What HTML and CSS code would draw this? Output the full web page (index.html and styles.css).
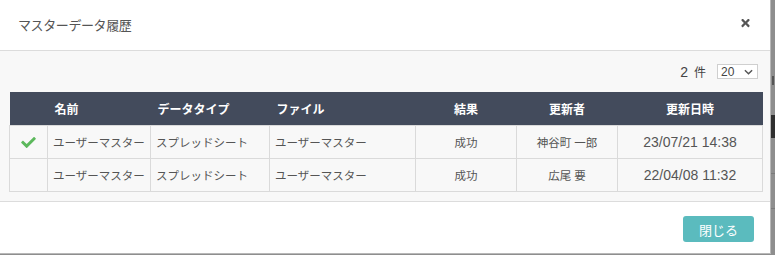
FILE: index.html
```html
<!DOCTYPE html>
<html lang="ja">
<head>
<meta charset="utf-8">
<title>マスターデータ履歴</title>
<link rel="stylesheet" href="styles.css">
</head>
<body>
<div class="page">
  <div class="modal">
    <div class="modal-header">
      <h4 class="modal-title">マスターデータ履歴</h4>
      <button class="close" type="button" aria-label="close">
        <svg viewBox="0 0 352 512" width="9" height="12"><path fill="#555" d="M242.72 256l100.07-100.07c12.28-12.28 12.28-32.19 0-44.48l-22.240-22.24c-12.28-12.28-32.19-12.28-44.48 0L176 189.28 75.930 89.21c-12.28-12.28-32.19-12.28-44.48 0L9.21 111.45c-12.28 12.28-12.28 32.19 0 44.48L109.28 256 9.21 356.07c-12.28 12.28-12.28 32.19 0 44.48l22.24 22.24c12.28 12.28 32.2 12.28 44.48 0L176 322.72l100.07 100.07c12.28 12.28 32.2 12.28 44.48 0l22.24-22.24c12.28-12.28 12.28-32.19 0-44.48L242.72 256z"/></svg>
      </button>
    </div>
    <div class="modal-body">
      <div class="count-row">
        <span class="count"><span class="num">2</span><span class="unit">件</span></span>
        <div class="select">
          <span>20</span>
          <svg viewBox="0 0 10 6" width="9" height="6"><path d="M1 1l4 4 4-4" fill="none" stroke="#555" stroke-width="1.6"/></svg>
        </div>
      </div>
      <table class="history">
        <colgroup>
          <col class="c-check"><col class="c-name"><col class="c-type"><col class="c-file"><col class="c-result"><col class="c-user"><col class="c-date">
        </colgroup>
        <thead>
          <tr>
            <th></th>
            <th>名前</th>
            <th>データタイプ</th>
            <th>ファイル</th>
            <th class="center">結果</th>
            <th class="center">更新者</th>
            <th class="center">更新日時</th>
          </tr>
        </thead>
        <tbody>
          <tr>
            <td class="center">
              <svg class="check" viewBox="0 64 512 384" width="15" height="11"><path fill="#5cb85c" d="M173.898 439.404l-166.4-166.4c-9.997-9.997-9.997-26.206 0-36.204l36.203-36.204c9.997-9.998 26.207-9.998 36.204 0L192 312.69 432.095 72.596c9.997-9.997 26.207-9.997 36.204 0l36.203 36.204c9.997 9.997 9.997 26.206 0 36.204l-294.4 294.401c-9.998 9.997-26.207 9.997-36.204-.001z"/></svg>
            </td>
            <td>ユーザーマスター</td>
            <td>スプレッドシート</td>
            <td>ユーザーマスター</td>
            <td class="center">成功</td>
            <td class="center">神谷町 一郎</td>
            <td class="center date">23/07/21 14:38</td>
          </tr>
          <tr>
            <td></td>
            <td>ユーザーマスター</td>
            <td>スプレッドシート</td>
            <td>ユーザーマスター</td>
            <td class="center">成功</td>
            <td class="center">広尾 要</td>
            <td class="center date">22/04/08 11:32</td>
          </tr>
        </tbody>
      </table>
    </div>
    <div class="modal-footer">
      <button class="btn-close" type="button">閉じる</button>
    </div>
  </div>
  <div class="backdrop">
    <div class="bd-mark"></div>
    <div class="bd-dark"></div>
    <div class="bd-line l1"></div>
    <div class="bd-line l2"></div>
  </div>
</div>
</body>
</html>
```

FILE: styles.css
```css
html, body {
  margin: 0;
  padding: 0;
}
body {
  width: 775px;
  height: 255px;
  overflow: hidden;
  background: #8e8e8e;
  font-family: "Liberation Sans", "Noto Sans CJK JP", sans-serif;
  color: #555;
}
.page {
  display: flex;
  height: 255px;
}
.modal {
  width: 770px;
  height: 253px;
  background: #fff;
  border-right: 1px solid #b8b8b8;
  border-bottom: 1px solid #b8b8b8;
  display: flex;
  flex-direction: column;
  flex: none;
}
.modal-header {
  height: 51px;
  border-bottom: 1px solid #dcdcdc;
  display: flex;
  align-items: center;
  justify-content: space-between;
  padding: 0 20px 0 18px;
  box-sizing: border-box;
  flex: none;
}
.modal-title {
  margin: 0;
  font-size: 13px;
  font-weight: normal;
  color: #555;
  letter-spacing: -0.4px;
  position: relative;
  top: -1px;
}
.close {
  border: 0;
  background: none;
  padding: 0;
  display: flex;
  position: relative;
  top: -2px;
}
.modal-body {
  background: #f8f8f8;
  padding: 13px 8px 9px 9px;
  flex: none;
  height: 150px;
  box-sizing: border-box;
}
.count-row {
  display: flex;
  justify-content: flex-end;
  align-items: center;
  height: 15px;
  margin-bottom: 13px;
  padding-right: 4px;
}
.count {
  display: flex;
  align-items: center;
  color: #444;
  margin-right: 11px;
}
.num {
  font-size: 14px;
  margin-right: 6px;
}
.unit {
  font-size: 12px;
}
.select {
  width: 32px;
  height: 13px;
  border: 1px solid #cfcfcf;
  background: #fff;
  display: flex;
  align-items: center;
  justify-content: space-between;
  padding: 0 4px 0 3px;
  font-size: 12px;
  color: #444;
}
.history {
  border-collapse: collapse;
  table-layout: fixed;
  width: 753px;
  font-size: 11.5px;
}
.c-check { width: 38px; }
.c-name { width: 103px; }
.c-type { width: 119px; }
.c-file { width: 146px; }
.c-result { width: 101px; }
.c-user { width: 101px; }
.c-date { width: 145px; }
.history th {
  background: #434b5c;
  color: #fff;
  font-weight: bold;
  font-size: 12px;
  height: 33px;
  text-align: left;
  padding: 0 7px;
  box-sizing: border-box;
  border: 0;
}
.history td {
  border: 1px solid #dadada;
  height: 33px;
  padding: 0 5px;
  white-space: nowrap;
  overflow: hidden;
  color: #555;
  box-sizing: border-box;
}
.history td.date {
  font-size: 14px;
}
.history .center {
  text-align: center;
}
.check {
  display: block;
  margin: 1px auto 0;
}
.modal-footer {
  flex: 1;
  border-top: 1px solid #dcdcdc;
  display: flex;
  justify-content: flex-end;
  align-items: flex-start;
  padding: 14px 16px 0 0;
}
.btn-close {
  width: 71px;
  height: 26px;
  border: 0;
  border-radius: 3px;
  background: #5bbbbe;
  color: #fff;
  font-family: "Liberation Sans", "Noto Sans CJK JP", sans-serif;
  font-size: 13px;
  padding: 0;
}
.backdrop {
  flex: 1;
  display: flex;
  flex-direction: column;
}
.bd-mark {
  width: 2px;
  height: 9px;
  background: #555;
  margin: 76px 0 30px 1px;
}
.bd-dark {
  height: 23px;
  background: #2f2f2f;
}
.bd-line {
  height: 1px;
  background: #7a7a7a;
}
.l1 { margin-top: 35px; }
.l2 { margin-top: 34px; }
```
